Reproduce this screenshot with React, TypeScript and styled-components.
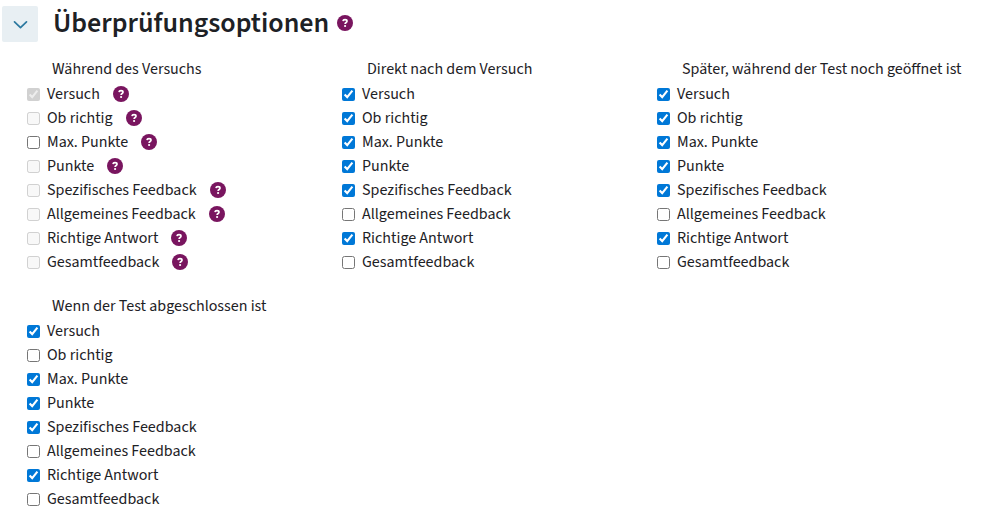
import React, { useId, useState } from "react";
import styled, { createGlobalStyle } from "styled-components";

const GlobalStyle = createGlobalStyle`
  body {
    margin: 0;
    background: #fff;
    color: #1d2125;
    font-family: "Source Sans 3", "Source Sans Pro", "Noto Sans CJK SC", sans-serif;
    font-size: 16px;
    line-height: 24px;
  }
`;

const Section = styled.section`
  padding: 6px 0 8px 2px;
`;

const Header = styled.header`
  display: flex;
  align-items: flex-start;
  gap: 15px;
`;

const Toggle = styled.button`
  display: flex;
  align-items: center;
  justify-content: center;
  width: 36px;
  height: 36px;
  padding: 0;
  border: 0;
  border-radius: 2px;
  background: #e8eff3;
  color: #2b789f;
  cursor: pointer;
`;

const Heading = styled.div`
  display: flex;
  align-items: center;
  gap: 8px;
`;

const Title = styled.h3`
  margin: 0;
  font-size: 28px;
  line-height: 34px;
  font-weight: 600;
`;

const HelpButton = styled.button`
  display: flex;
  padding: 0;
  border: 0;
  background: none;
  color: #79155f;
  cursor: pointer;
`;

const Groups = styled.div`
  display: flex;
  flex-wrap: wrap;
  row-gap: 20px;
  padding: 15px 0 0 25px;
`;

const Group = styled.fieldset`
  width: 315px;
  min-width: 0;
  margin: 0;
  padding: 0;
  border: 0;
`;

const GroupTitle = styled.legend`
  margin-bottom: 1px;
  padding: 0 0 0 25px;
  white-space: nowrap;
`;

const Row = styled.div`
  display: flex;
  align-items: center;
  height: 24px;
`;

const Checkbox = styled.input`
  width: 13px;
  height: 13px;
  margin: 0 7px 0 0;
  accent-color: #0078d7;
`;

const Label = styled.label`
  margin-right: 13px;
  white-space: nowrap;
`;

const options = [
  "Versuch",
  "Ob richtig",
  "Max. Punkte",
  "Punkte",
  "Spezifisches Feedback",
  "Allgemeines Feedback",
  "Richtige Antwort",
  "Gesamtfeedback",
];

interface GroupData {
  title: string;
  checked: number[];
  enabled?: number[];
  help?: boolean;
}

const groups: GroupData[] = [
  { title: "Während des Versuchs", checked: [0], enabled: [2], help: true },
  { title: "Direkt nach dem Versuch", checked: [0, 1, 2, 3, 4, 6] },
  { title: "Später, während der Test noch geöffnet ist", checked: [0, 1, 2, 3, 4, 6] },
  { title: "Wenn der Test abgeschlossen ist", checked: [0, 2, 3, 4, 6] },
];

function Help({ topic }: { topic: string }) {
  return (
    <HelpButton type="button" aria-label={`Hilfe für ${topic}`}>
      <svg width="16" height="16" viewBox="0 0 16 16" aria-hidden="true">
        <circle cx="8" cy="8" r="8" fill="currentColor" />
        <path
          d="M6 6.1C6.1 5.1 6.9 4.7 8 4.7c1.2 0 2 .5 2 1.5C10 7.5 8.1 7.4 8.1 8.9"
          fill="none"
          stroke="#fff"
          strokeWidth="1.7"
        />
        <circle cx="8.1" cy="11" r="1.1" fill="#fff" />
      </svg>
    </HelpButton>
  );
}

function OptionGroup({ title, checked, enabled, help }: GroupData) {
  const id = useId();
  return (
    <Group>
      <GroupTitle>{title}</GroupTitle>
      {options.map((name, i) => (
        <Row key={name}>
          <Checkbox
            type="checkbox"
            id={`${id}-${i}`}
            defaultChecked={checked.includes(i)}
            disabled={enabled ? !enabled.includes(i) : false}
          />
          <Label htmlFor={`${id}-${i}`}>{name}</Label>
          {help && <Help topic={name} />}
        </Row>
      ))}
    </Group>
  );
}

export default function App() {
  const [open, setOpen] = useState(true);
  return (
    <>
      <GlobalStyle />
      <Section>
        <Header>
          <Toggle
            type="button"
            aria-expanded={open}
            aria-label="Überprüfungsoptionen"
            onClick={() => setOpen(!open)}
          >
            <svg width="16" height="16" viewBox="0 0 16 16" fill="none" aria-hidden="true">
              <path
                d="M2.5 5.8 8.5 11.6 14.5 5.8"
                stroke="currentColor"
                strokeWidth="1.7"
                strokeLinecap="round"
                strokeLinejoin="round"
              />
            </svg>
          </Toggle>
          <Heading>
            <Title>Überprüfungsoptionen</Title>
            <Help topic="Überprüfungsoptionen" />
          </Heading>
        </Header>
        {open && (
          <Groups>
            {groups.map((group) => (
              <OptionGroup key={group.title} {...group} />
            ))}
          </Groups>
        )}
      </Section>
    </>
  );
}
